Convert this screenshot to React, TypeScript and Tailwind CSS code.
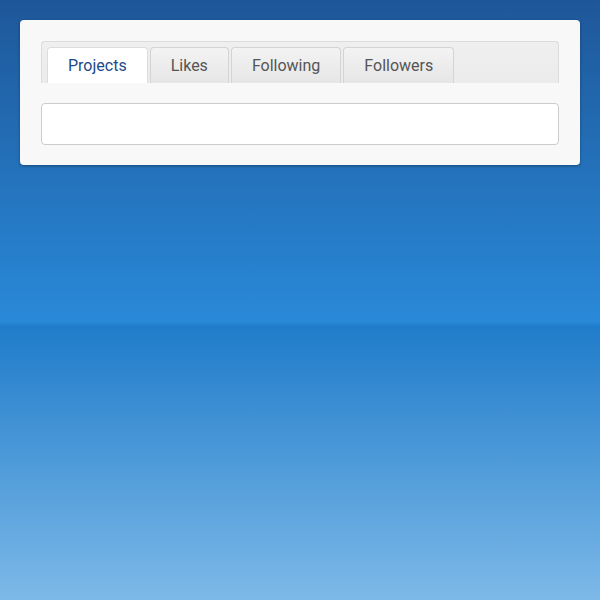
export default function App() {
  const tabs = ["Projects", "Likes", "Following", "Followers"];
  return (
    <div className="min-h-[600px] w-full bg-[linear-gradient(to_bottom,#1e5799_0%,#2989d8_53.5%,#207cca_54.5%,#7db9e8_100%)] p-5 font-['Roboto',sans-serif]">
      <div className="rounded-[4px] bg-[#f8f8f8] px-[21px] pt-[21px] pb-5 shadow-[0_1px_3px_rgba(0,0,0,0.35)]">
        {/* Tab strip */}
        <div className="flex h-[42px] items-end gap-[2px] rounded-t-[4px] border border-b-0 border-[#dcdcdc] bg-[linear-gradient(to_bottom,#efefef,#ebebeb)] px-[5px]">
          {tabs.map((t, i) => (
            <div
              key={t}
              className={
                i === 0
                  ? "flex h-[36px] items-center rounded-t-[4px] border border-b-0 border-[#dddddd] bg-white px-5 pt-[1px] text-[16px] text-[#1d4a8c]"
                  : "flex h-[36px] items-center rounded-t-[4px] border border-b-0 border-[#d4d4d4] bg-[linear-gradient(to_bottom,#f3f3f3,#e6e6e6)] px-5 pt-[1px] text-[16px] text-[#555555]"
              }
            >
              {t}
            </div>
          ))}
        </div>
        {/* Panel */}
        <div className="mt-5 h-[42px] rounded-[4px] border border-[#cccccc] bg-white" />
      </div>
    </div>
  );
}
